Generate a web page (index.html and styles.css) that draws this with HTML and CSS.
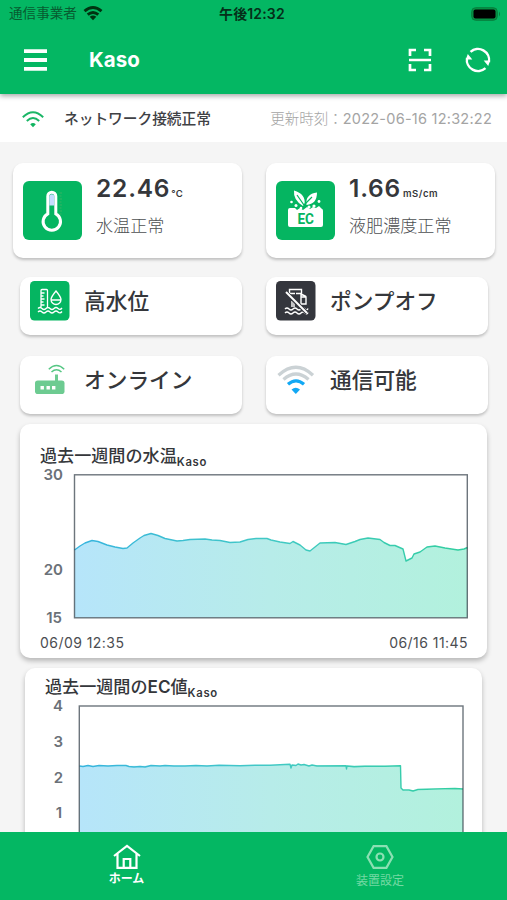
FILE: index.html
```html
<!DOCTYPE html>
<html lang="ja">
<head>
<meta charset="utf-8">
<title>Kaso</title>
<link rel="stylesheet" href="styles.css">
</head>
<body>
<div class="app">
  <header class="top">
    <div class="status">
      <span class="carrier">通信事業者</span>
      <svg class="status-wifi" viewBox="0 0 20 15"><g fill="none" stroke="#031" stroke-width="2.900"><path d="M1.500 5.200Q10-2 18.500 5.200M4.700 8.600Q10 4.200 15.300 8.600"/></g><path fill="#031" d="M6.700 10.800Q10 8.200 13.300 10.800L10 14.300z"/></svg>
      <span class="clock">午後12:32</span>
      <svg class="battery" viewBox="0 0 30 14"><rect x=".7" y=".7" width="25.600" height="12.600" rx="4" fill="#069344" stroke="#087d3d"/><rect x="2.500" y="2.500" width="22" height="9" rx="2" fill="#000"/><path d="M28 4.500q2 2.500 0 5z" fill="#087d3d"/></svg>
    </div>
    <div class="bar">
      <svg class="menu" viewBox="0 0 23 22"><path d="M0 2.200h23M0 11h23M0 19.800h23" stroke="#fff" stroke-width="3.800"/></svg>
      <h1>Kaso</h1>
      <svg class="scan" viewBox="0 0 24 24"><path d="M2 8V2h6M16 2h6v6M22 16v6h-6M8 22H2v-6M1 12h22" fill="none" stroke="#fff" stroke-width="2.700"/></svg>
      <svg class="refresh" viewBox="0 0 26 26"><g fill="none" stroke="#fff" stroke-width="2.400"><path d="M5.500 4.800A11.200 11.200 0 0 1 24 15M20.500 21.200A11.200 11.200 0 0 1 2 11"/></g><path fill="#fff" d="M18.700 13.400h6.500l-2 5.700zM.8 12.600h6.500l-4.500-5.700z"/></svg>
    </div>
  </header>

  <div class="network">
    <svg class="net-wifi" viewBox="0 0 22 17"><g fill="none" stroke="#1bb667" stroke-width="1.900"><path d="M.8 6.300Q11-3.800 21.200 6.300M4.800 10Q11 4.200 17.200 10"/></g><path fill="#10b460" d="M8.200 13.200Q11 11 13.800 13.200L11 16.200z"/></svg>
    <span class="net-text">ネットワーク接続正常</span>
    <span class="updated">更新時刻：<span class="stamp">2022-06-16 12:32:22</span></span>
  </div>

  <main>
    <section class="readings">
      <div class="card reading">
        <svg class="tile-lg" viewBox="0 0 59 59"><rect width="59" height="59" rx="6" fill="#05b561"/><path d="M24.800 32.800V15.200a4 4 0 0 1 8 0v17.600a8.700 8.700 0 1 1-8 0z" fill="#05b561" stroke="#fff" stroke-width="3"/><path d="M26.300 24.500V15.700a2.500 2.500 0 0 1 5 0v8.800z" fill="#c5dcff"/><path d="M36.500 12h2.500M36.500 15h2M36.500 18h2.500M36.500 21h2M36.500 24h2.500M36.500 27h2M36.500 30h2.500M36.500 33h2" stroke="#36b365" stroke-width="1"/></svg>
        <div class="reading-text"><div class="value">22.46<small>°C</small></div><div class="state">水温正常</div></div>
      </div>
      <div class="card reading">
        <svg class="tile-lg" viewBox="0 0 59 59"><rect width="59" height="59" rx="6" fill="#05b561"/><path fill="#fff" d="M12 29q0-2 2-2h5l2 2 3-2 3 2 4-3 3 2 3-2 3 1 3-2 3 3q1 0 1 2v14q0 2-2 2H14q-2 0-2-2zM27 25Q17 19 18 9.500Q30 13 28.500 23zM30.500 24Q29 13 41 11.500Q41 23 30.500 24z"/><path d="M21 14l7 10 8-8" fill="none" stroke="#05b561" stroke-width="1.200"/><g fill="#fff"><circle cx="15.500" cy="21" r="1.300"/><circle cx="20" cy="24.500" r="1.500"/><circle cx="43" cy="20.500" r="1.400"/><circle cx="38" cy="25" r="1.600"/><circle cx="25" cy="27" r="1.300"/><circle cx="33" cy="26" r="1.500"/></g><text x="21.500" y="43" class="ec" textLength="16.500" lengthAdjust="spacingAndGlyphs">EC</text></svg>
        <div class="reading-text"><div class="value">1.66<small class="unit">mS/cm</small></div><div class="state">液肥濃度正常</div></div>
      </div>
    </section>

    <section class="states">
      <div class="card item">
        <svg class="tile" viewBox="0 0 40 40"><rect width="39.500" height="39.500" rx="4.500" fill="#05b561"/><g fill="none" stroke="#fff" stroke-width="1.300"><path d="M11 26V9.500q0-1 1-1h4.500q1 0 1 1V26M11 12h3.500M11 15h2.500M11 18h3.500M11 21h2.500M11 24h3.500M26 10q-5 6-5 8.500a5 5 0 0 0 10 0Q31 16 26 10zM21.500 19h9M8 27.500q2-2 4 0t4 0 4 0 4 0 4 0 4-.5M8 31q2-2 4 0t4 0 4 0 4 0 4 0 4-.5"/></g></svg>
        <span>高水位</span>
      </div>
      <div class="card item">
        <svg class="tile" viewBox="0 0 40 40"><rect width="39.500" height="39.500" rx="4.500" fill="#34363d"/><g fill="none" stroke="#fff" stroke-width="1.400"><path d="M13.500 12.500V8.500h12v4M13 12.500h6M20 12.500h5v12M16 20v6M18 26V18M25 16h5v7h-5M25 13l5 2.500M9 28q2-2 4 0t4 0 4 0 4 0 4 0 3-.5M9 32q2-2 4 0t4 0 4 0 4 0 4 0 3-.5"/></g><path d="M10.500 12l20.500 20" stroke="#34363d" stroke-width="4"/><path d="M10 11l21 21" stroke="#fff" stroke-width="1.900"/></svg>
        <span>ポンプオフ</span>
      </div>
      <div class="card item">
        <svg class="tile" viewBox="0 0 40 40"><rect x="5" y="20.500" width="29.500" height="13.500" rx="2.800" fill="#6dcb91"/><path d="M26.500 14.500v7" stroke="#6dcb91" stroke-width="3"/><path d="M18.800 9.200q7.700-7.400 15.400 0M21.500 12q5-4.500 10 0" fill="none" stroke="#56c784" stroke-width="1.500"/><path d="M10.500 27.800h3.400M16.500 27.800h3.400M22 27.800h3.400" stroke="#fff" stroke-width="3.400"/></svg>
        <span>オンライン</span>
      </div>
      <div class="card item">
        <svg class="tile" viewBox="0 0 40 40"><g fill="none" stroke-width="3.300"><path d="M2.500 15.200Q20-.7 37 15.200M7.500 19.500Q20 8.500 32.500 19.500" stroke="#cbd2d5"/><path d="M12 24.300Q20 17.500 28 24.300" stroke="#12a8f4"/></g><path d="M15.500 29.500Q19.800 26 24 29.500L19.800 34z" fill="#12a8f4"/></svg>
        <span>通信可能</span>
      </div>
    </section>

    <section class="card chart">
      <h2>過去一週間の水温<small>Kaso</small></h2>
      <svg class="plot" viewBox="40 467 428 160">
        <defs>
          <linearGradient id="fill" x1="0" x2="1"><stop stop-color="#b6e5fa"/><stop offset=".5" stop-color="#b7ece9"/><stop offset="1" stop-color="#b2f1dd"/></linearGradient>
          <linearGradient id="line" gradientUnits="userSpaceOnUse" x1="74" x2="468" y1="0" y2="0"><stop stop-color="#37b4df"/><stop offset=".5" stop-color="#42c9c5"/><stop offset="1" stop-color="#31ce9f"/></linearGradient>
        </defs>
        <path fill="url(#fill)" d="M74.500 550L80 546 85 543 92 540.500 98 541.500 107 545 115 547 123 548.500 127 548 133 543 140 538 144 535.500 151 533.500 158 535.500 165 538.500 177 541 183 540.500 190 539.500 205 539 212 540 220 540.500 230 542.500 240 542 248 539.500 256 538.500 267 538.500 271 540 280 542 290 543.500 293 541.500 300 545 306 550 310 551 315 547 320 543 335 542.500 346 544.500 355 541.500 360 539.500 368 538 380 539.500 384 542.500 390 545.500 395 545.500 403 549 406 561 412 558 414 554 420 552 427 547 435 546 445 548 458 550 464 549 467.500 547.500V617.500H74.500z"/>
        <path class="series" d="M74.500 550L80 546 85 543 92 540.500 98 541.500 107 545 115 547 123 548.500 127 548 133 543 140 538 144 535.500 151 533.500 158 535.500 165 538.500 177 541 183 540.500 190 539.500 205 539 212 540 220 540.500 230 542.500 240 542 248 539.500 256 538.500 267 538.500 271 540 280 542 290 543.500 293 541.500 300 545 306 550 310 551 315 547 320 543 335 542.500 346 544.500 355 541.500 360 539.500 368 538 380 539.500 384 542.500 390 545.500 395 545.500 403 549 406 561 412 558 414 554 420 552 427 547 435 546 445 548 458 550 464 549 467.500 547.500"/>
        <rect class="frame" x="74.500" y="474.800" width="392.800" height="143"/>
        <text class="tick" x="63" y="480">30</text><text class="tick" x="63" y="575">20</text><text class="tick" x="62" y="623">15</text>
      </svg>
      <div class="range"><span>06/09 12:35</span><span>06/16 11:45</span></div>
    </section>

    <section class="card chart chart-ec">
      <h2>過去一週間の<b>EC</b>値<small>Kaso</small></h2>
      <svg class="plot" viewBox="45 698 419 160">
        <path fill="url(#fill)" d="M79.500 766L250 765.500 290 764.700 400.700 766 401.200 789 405 790.500 463 789V850H79.500z"/>
        <path class="series" d="M79.500 766L83 766.500 88 765.500 93 766.500 99 765.500 108 766 117 765.500 126 765.500 129 766.500 134 767 140 766.500 145 767 151 765.500 160 766 165 765.500 174 766 185 766 196 765.500 207 766 219 765.300 240 765.800 255 765.300 270 765.300 290 764.300 291 768 292 765 296 765.500 298 764 301 765 304 764.500 309 766 312 765 317 766 346 765.800 346.500 769 347 766 354 766.800 365 766.200 385 766.300 400.500 765.700 401 788 403 790 409 790 413 791 418 789.500 435 789 455 788.500 463 789"/>
        <rect class="frame" x="79.300" y="706" width="383.700" height="143"/>
        <text class="tick" x="63" y="711">4</text><text class="tick" x="63" y="747">3</text><text class="tick" x="63" y="782.500">2</text><text class="tick" x="62" y="818">1</text>
      </svg>
    </section>
  </main>

  <nav>
    <a class="tab active"><svg viewBox="0 0 28 26"><g fill="none" stroke="#fff" stroke-width="2.200"><path d="M1 12L14 2l13 10M4.500 9.500v14.400h19V9.500M10.700 24v-9h6.600v9"/></g></svg><span>ホーム</span></a>
    <a class="tab"><svg viewBox="0 0 28 26"><g fill="none" stroke="#8be0b3" stroke-width="2.200"><path d="M7.600 2.100h12.800L26.500 13l-6.100 10.900H7.600L1.500 13z"/><circle cx="14" cy="13" r="3.500"/></g></svg><span>装置設定</span></a>
  </nav>
</div>
</body>
</html>
```
FILE: styles.css
```css
* { box-sizing: border-box; }
body { margin: 0; font-family: Inter, "Noto Sans CJK JP", sans-serif; background: #f5f5f5; color: #35373b; }
svg { display: block; flex: none; }
h1, h2 { margin: 0; }
.app { width: 507px; height: 900px; overflow: hidden; display: flex; flex-direction: column; }
.top { flex: none; height: 94px; background: #04b763; z-index: 1; box-shadow: 0 2px 5px rgba(0, 0, 0, .35); }
.status { height: 27px; display: grid; grid-template-columns: 74px 145px 1fr 30px; padding: 0 6px 0 9px; align-items: center; line-height: 27px; color: #052f19; }
.carrier { font-size: 13.600px; color: #075b30; white-space: nowrap; }
.status-wifi { width: 20px; height: 15px; }
.clock { font-size: 14px; font-weight: 600; white-space: nowrap; letter-spacing: .15px; }
.status .clock { margin-left: -9px; }
.battery { width: 30px; height: 14px; }
.bar { height: 66px; display: flex; align-items: center; padding: 0 16px 0 24px; }
.menu { width: 23px; height: 22px; }
.bar h1 { flex: 1; margin-left: 42px; color: #fff; font-size: 20.500px; font-weight: 700; line-height: 26px; }
.scan { width: 24px; height: 24px; margin-right: 33px; }
.refresh { width: 26px; height: 26px; }
.network { flex: none; height: 48px; background: #fff; display: flex; align-items: center; padding: 2px 15px 0 22px; line-height: 20px; white-space: nowrap; }
.net-wifi { width: 22px; height: 17px; }
.net-text { margin-left: 20px; font-size: 14.700px; font-weight: 500; color: #3f4145; }
.updated { margin-left: auto; font-size: 14.500px; font-weight: 300; color: #a4a4a4; }
.stamp { font-weight: 400; letter-spacing: .24px; }
main { flex: 1; min-height: 0; overflow: hidden; padding-top: 21px; }
.card { background: #fff; border-radius: 10px; box-shadow: 0 2px 3px rgba(0, 0, 0, .22); }
.readings { display: grid; grid-template-columns: 229px 229px; gap: 24px; padding-left: 13px; }
.reading { height: 95px; display: flex; padding: 18px 10px; }
.tile-lg { width: 59px; height: 59px; }
.reading-text { margin-left: 14px; margin-top: -8px; white-space: nowrap; }
.value { font-size: 24.500px; font-weight: 600; letter-spacing: .8px; line-height: 30px; }
.value small { font-size: 9.500px; letter-spacing: .1px; margin-left: 1px; }
.value .unit { margin-left: 2px; letter-spacing: .5px; }
.state { margin-top: 4px; font-size: 17.100px; font-weight: 300; line-height: 26px; color: #4d4f52; }
.ec { font: 700 15px Roboto, sans-serif; fill: #05b561; }
.states { display: grid; grid-template-columns: 222px 222px; grid-auto-rows: 58px; gap: 21px 24px; padding: 19px 0 0 20px; }
.item { display: flex; padding: 4px 10px; font-size: 21.700px; font-weight: 500; line-height: 40px; white-space: nowrap; }
.item span { margin-left: 14px; }
.tile { width: 40px; height: 40px; }
.chart { width: 467px; height: 234px; margin: 10px auto 0 20px; padding: 21px 19px 0 20px; box-shadow: 0 3px 5px rgba(0, 0, 0, .25); }
.chart h2 { height: 22px; line-height: 22px; font-size: 17.100px; font-weight: 500; white-space: nowrap; }
.chart b { font-weight: 600; }
.chart small { font-size: 11.300px; font-weight: 600; letter-spacing: .7px; position: relative; top: 4px; }
.plot { width: 428px; height: 160px; overflow: visible; }
.frame { fill: none; stroke: #35404a; stroke-opacity: .72; stroke-width: 1.400; }
.series { fill: none; stroke: url(#line); stroke-width: 1.400; stroke-linejoin: round; }
.tick { font-size: 15px; font-weight: 600; fill: #6b7178; text-anchor: end; }
.range { display: flex; justify-content: space-between; font-size: 14px; letter-spacing: .45px; line-height: 20px; margin-top: 6px; color: #4b4d51; }
.chart-ec { width: 457px; margin-left: 25px; padding: 8px 18px 0 20px; }
.chart-ec .plot { width: 419px; }
nav { flex: none; height: 68px; background: #04b763; display: grid; grid-template-columns: 253px 254px; position: relative; z-index: 1; }
.tab { display: flex; flex-direction: column; align-items: center; padding-top: 12px; font-size: 12px; line-height: 18px; color: #75d9a4; }
.tab svg { width: 28px; height: 26px; }
.tab.active span { color: #fff; font-weight: 700; margin-top: 0; }
.tab span { margin-top: 2px; }
```
